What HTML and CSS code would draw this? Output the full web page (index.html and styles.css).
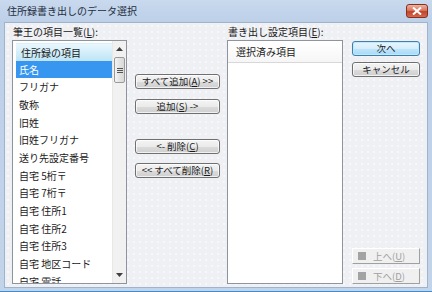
FILE: index.html
```html
<!DOCTYPE html>
<html lang="ja">
<head>
<meta charset="utf-8">
<title>住所録書き出しのデータ選択</title>
<link rel="stylesheet" href="styles.css">
</head>
<body>
<div class="window">
  <div class="titlebar">
    <span class="title">住所録書き出しのデータ選択</span>
    <div class="close">
      <svg width="10" height="8" viewBox="0 0 10 8"><path d="M1 0.5 L9 7.5 M9 0.5 L1 7.5" stroke="#fff" stroke-width="2" fill="none"/></svg>
    </div>
  </div>
  <div class="client">
    <div class="col col-left">
      <div class="label">筆王の項目一覧(<u>L</u>):</div>
      <div class="listbox">
        <div class="items">
          <div class="row header">住所録の項目</div>
          <div class="row selected">氏名</div>
          <div class="row">フリガナ</div>
          <div class="row">敬称</div>
          <div class="row">旧姓</div>
          <div class="row">旧姓フリガナ</div>
          <div class="row">送り先設定番号</div>
          <div class="row">自宅 5桁〒</div>
          <div class="row">自宅 7桁〒</div>
          <div class="row">自宅 住所1</div>
          <div class="row">自宅 住所2</div>
          <div class="row">自宅 住所3</div>
          <div class="row">自宅 地区コード</div>
          <div class="row">自宅 電話</div>
        </div>
        <div class="scrollbar">
          <div class="sb-btn">
            <svg width="7" height="4" viewBox="0 0 7 4"><path d="M0 4 L3.5 0 L7 4 Z" fill="#404040"/></svg>
          </div>
          <div class="thumb"><span class="grip"></span></div>
          <div class="track"></div>
          <div class="sb-btn">
            <svg width="7" height="4" viewBox="0 0 7 4"><path d="M0 0 L3.5 4 L7 0 Z" fill="#404040"/></svg>
          </div>
        </div>
      </div>
    </div>
    <div class="col col-mid">
      <div class="btn btn-addall">すべて追加(<u>A</u>) &gt;&gt;</div>
      <div class="btn btn-add">追加(<u>S</u>) -&gt;</div>
      <div class="btn btn-del">&lt;- 削除(<u>C</u>)</div>
      <div class="btn btn-delall">&lt;&lt; すべて削除(<u>R</u>)</div>
    </div>
    <div class="col col-right">
      <div class="label">書き出し設定項目(<u>E</u>):</div>
      <div class="listbox listbox-plain">
        <div class="plain-header">選択済み項目</div>
      </div>
    </div>
    <div class="col col-actions">
      <div class="btn btn-default">次へ</div>
      <div class="btn btn-cancel">キャンセル</div>
      <div class="spacer"></div>
      <div class="btn-flat"><span class="sq"></span>上へ(<u>U</u>)</div>
      <div class="btn-flat btn-flat-2"><span class="sq"></span>下へ(<u>D</u>)</div>
    </div>
  </div>
</div>
</body>
</html>
```
FILE: styles.css
```css
* { box-sizing: border-box; }
html, body { margin: 0; padding: 0; }
body {
  width: 432px;
  height: 292px;
  overflow: hidden;
  font-family: "Noto Sans CJK JP", "Noto Sans", sans-serif;
  font-size: 10px;
  color: #1a1a1a;
}
u { text-decoration: underline; text-underline-offset: 1px; }

.window {
  width: 432px;
  height: 292px;
  display: flex;
  flex-direction: column;
  background: linear-gradient(#c9d9ee, #bcd0e8 22px, #c2d4ea);
  padding: 0 4px 3px 4px;
  border-bottom: 1px solid #3d8fd0;
}

.titlebar {
  flex: 0 0 22px;
  height: 22px;
  display: flex;
  align-items: center;
  padding-left: 3px;
}
.title {
  flex: 1;
  font-size: 10px;
  color: #1e2d3d;
  line-height: 12px;
}
.close {
  width: 22px;
  height: 14px;
  margin-top: -1px;
  border: 1px solid #8a2e1e;
  border-radius: 3px;
  background: linear-gradient(#eab3a4, #d9765e 45%, #c2432a 55%, #d26a4f);
  display: flex;
  align-items: center;
  justify-content: center;
}

.client {
  flex: 1 1 0;
  min-height: 0;
  display: flex;
  border: 1px solid #9fb3cc;
  background-color: #eef0f3;
  background-image: radial-gradient(circle, #fafbfc 0.6px, transparent 0.9px);
  background-size: 6px 6px;
  padding: 3px 7px 3px 7px;
}

.col { display: flex; flex-direction: column; min-height: 0; }
.col-left { width: 115px; }
.col-mid { width: 85px; margin-left: 8px; padding-top: 48px; }
.col-right { width: 116px; margin-left: 7px; }
.col-actions { width: 68px; margin-left: 9px; padding-top: 15px; }

.label {
  flex: 0 0 14px;
  height: 14px;
  line-height: 12px;
  padding-left: 1px;
}

.listbox {
  flex: 1 1 0;
  min-height: 0;
  display: flex;
  border: 1px solid #8e949c;
  background: #fff;
  overflow: hidden;
}
.items {
  flex: 1;
  padding: 2px 0 0 3px;
  overflow: hidden;
}
.row {
  height: 17.67px;
  line-height: 17.67px;
  padding-left: 3px;
  white-space: nowrap;
}
.row.header {
  padding-left: 5px;
  background: linear-gradient(#eaf7fd, #d3eefa 50%, #bfe4f5);
  border-top: 1px solid #d8f0fb;
}
.row.selected {
  background: #3797f0;
  color: #fff;
}

.scrollbar {
  width: 14px;
  display: flex;
  flex-direction: column;
  background: #f1f1f1;
  border-left: 1px solid #e8e8e8;
}
.sb-btn {
  flex: 0 0 16px;
  display: flex;
  align-items: center;
  justify-content: center;
}
.thumb {
  flex: 0 0 26px;
  margin: 0 1px;
  border: 1px solid #9a9a9a;
  border-radius: 2px;
  background: linear-gradient(90deg, #f4f4f4, #e4e4e4 50%, #d8d8d8);
  display: flex;
  align-items: center;
  justify-content: center;
}
.grip {
  width: 6px;
  height: 5px;
  border-top: 1px solid #555;
  border-bottom: 1px solid #555;
  background: linear-gradient(#555, #555) center / 6px 1px no-repeat;
}
.track { flex: 1; }

.listbox-plain { flex-direction: column; }
.plain-header {
  flex: 0 0 20px;
  line-height: 20px;
  margin-top: 1px;
  padding-left: 8px;
  background: linear-gradient(#ffffff, #f6f6f6);
  border-bottom: 1px solid #d8d8d8;
}

.btn {
  flex: 0 0 15px;
  height: 15px;
  line-height: 13px;
  font-size: 9.5px;
  text-align: center;
  white-space: nowrap;
  border: 1px solid #707070;
  border-radius: 3px;
  background: linear-gradient(#f4f4f4, #ebebeb 50%, #dcdcdc 51%, #cfcfcf);
  box-shadow: inset 0 0 0 1px rgba(255,255,255,0.7);
}
.btn-add { margin-top: 10px; }
.btn-del { margin-top: 25px; }
.btn-delall { margin-top: 9px; }

.btn-default {
  border-color: #3c7fb1;
  background: linear-gradient(#e8f6fd, #d6eefb 50%, #bee6fd 51%, #a7d9f5);
  box-shadow: inset 0 0 0 1px #c2e9fb;
}
.btn-cancel { margin-top: 6px; }

.spacer { flex: 1; }
.btn-flat {
  flex: 0 0 16px;
  display: flex;
  align-items: center;
  padding-left: 5px;
  font-size: 9.5px;
  color: #a0a0a0;
  border: 1px solid;
  border-color: #ffffff #a0a0a0 #a0a0a0 #ffffff;
  background: #f0f0f0;
  white-space: nowrap;
}
.btn-flat-2 { margin-top: 4px; }
.sq {
  width: 8px;
  height: 8px;
  background: #a3a3a3;
  margin-right: 7px;
}
```
